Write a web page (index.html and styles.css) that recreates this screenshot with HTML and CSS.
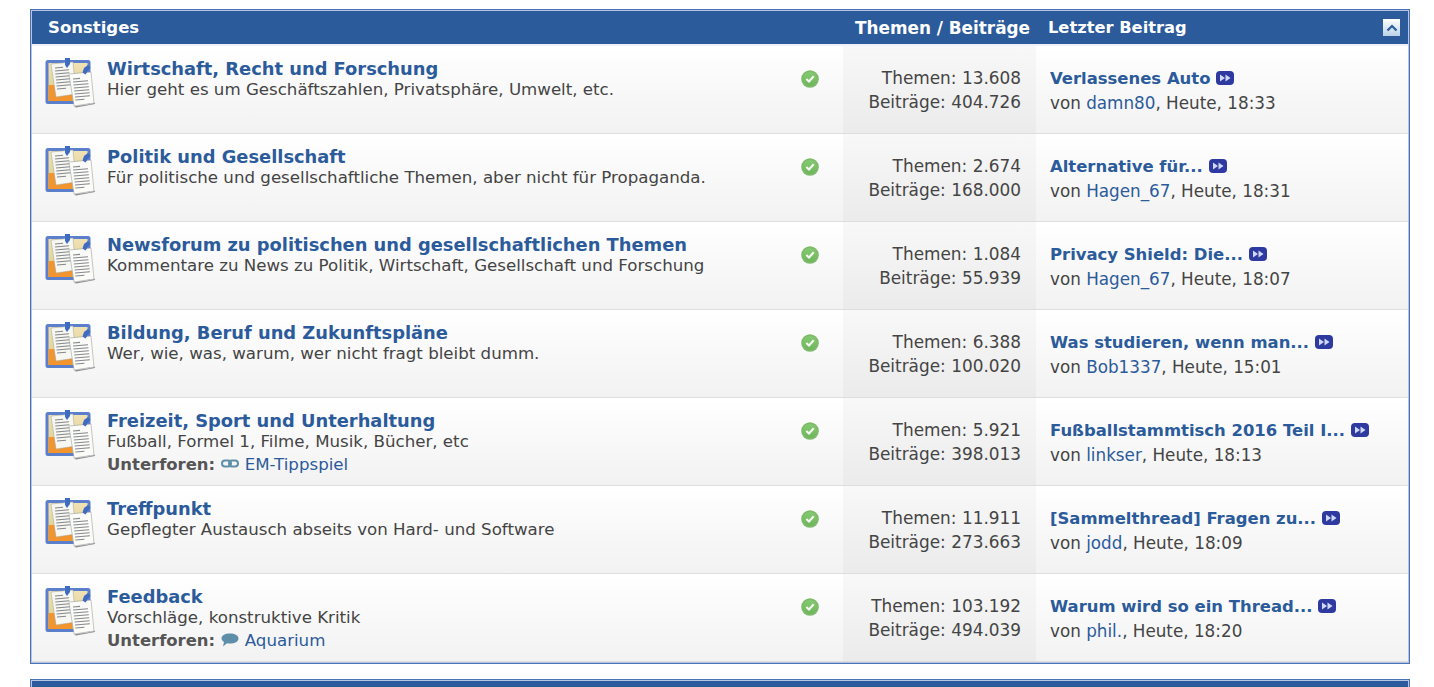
FILE: index.html
```html
<!DOCTYPE html>
<html lang="de">
<head>
    <meta charset="UTF-8">
    <meta name="viewport" content="width=device-width, initial-scale=1.0">
    <title>Sonstiges</title>
    <link rel="stylesheet" href="styles.css">
</head>
<body>
    <svg class="defs" width="0" height="0">
        <defs>
            <linearGradient id="board-tan" x1="0" y1="0" x2="0" y2="1">
                <stop offset="0" stop-color="#efe2b4"/>
                <stop offset="1" stop-color="#dcc88a"/>
            </linearGradient>
            <symbol id="forum-icon" viewBox="0 0 50 50">
                <rect x="0.500" y="2" width="45" height="44" rx="2.500" fill="#5b7fcb"/>
                <rect x="3.500" y="5" width="39" height="38" fill="url(#board-tan)"/>
                <rect x="3.500" y="27" width="24" height="16" fill="#f2952f"/>
                <path d="M6 6 L28 4 L31 36 L11 39 Z" fill="#f7f7f2" stroke="#a0a09c" stroke-width=".5"/>
                <path d="M10 10l8-.7M10 13l14-1.200M10.300 16l14-1.200M10.600 19l14-1.200M11 22l14-1.200M11.300 25l14-1.200M11.600 28l14-1.200M12 31l9-.8" stroke="#84868c" stroke-width="1.100"/>
                <path d="M24 16 L46 14 L49 45 L29 48 Z" fill="#fbfbf8" stroke="#90908f" stroke-width=".5"/>
                <path d="M28 21l7-.6M28 24l15-1.300M28.400 27l15-1.300M28.800 30l15-1.300M29.200 33l15-1.300M29.600 36l15-1.300M30 39l15-1.300M30.400 42l9-.8" stroke="#86888e" stroke-width="1.100"/>
                <path d="M46 46l4-1v1l-19 3.500-2-1z" fill="#8a8a8a"/>
                <path d="M20 0h5v6l-3 4-2-3z" fill="#3f6cc0"/>
                <path d="M39 10l4-3 2.500 2.500-5 7-3-2z" fill="#3f6cc0"/>
            </symbol>
            <linearGradient id="new-bg" x1="0" y1="0" x2="0" y2="1">
                <stop offset="0" stop-color="#86c972"/>
                <stop offset="1" stop-color="#6fb45c"/>
            </linearGradient>
            <symbol id="new-icon" viewBox="0 0 18 18">
                <circle cx="9" cy="9" r="8.800" fill="#7dba6a"/>
                <circle cx="9" cy="9" r="7" fill="url(#new-bg)"/>
                <path d="M5.300 9 L8 11.500 L12.700 6.300" fill="none" stroke="#f2f8ee" stroke-width="2.200"/>
            </symbol>
            <symbol id="go-icon" viewBox="0 0 18 14">
                <rect width="18" height="14" rx="4" fill="#2f3aa0"/>
                <path d="M4 3.500 L9 7 L4 10.500 Z M9.500 3.500 L14.500 7 L9.500 10.500 Z" fill="#cfd8f4"/>
            </symbol>
        </defs>
    </svg>

    <section class="category">
        <header class="category-head">
            <h2 class="category-title">Sonstiges</h2>
            <span class="head-stats">Themen / Beiträge</span>
            <span class="head-last">Letzter Beitrag</span>
            <span class="collapse">
                <svg width="12" height="8" viewBox="0 0 12 8"><path d="M1.500 6.500 L6 2 L10.500 6.500" fill="none" stroke="#2b5b9b" stroke-width="2.200"/></svg>
            </span>
        </header>

        <div class="forum-row">
            <svg class="forum-icon"><use href="#forum-icon"/></svg>
            <div class="forum-main">
                <a class="forum-title" href="#">Wirtschaft, Recht und Forschung</a>
                <p class="forum-desc">Hier geht es um Geschäftszahlen, Privatsphäre, Umwelt, etc.</p>
            </div>
            <svg class="status"><use href="#new-icon"/></svg>
            <div class="forum-stats"><p>Themen: 13.608</p><p>Beiträge: 404.726</p></div>
            <div class="forum-last">
                <p><a class="last-title" href="#">Verlassenes Auto</a><svg class="go"><use href="#go-icon"/></svg></p>
                <p>von <a href="#">damn80</a>, Heute, 18:33</p>
            </div>
        </div>

        <div class="forum-row">
            <svg class="forum-icon"><use href="#forum-icon"/></svg>
            <div class="forum-main">
                <a class="forum-title" href="#">Politik und Gesellschaft</a>
                <p class="forum-desc">Für politische und gesellschaftliche Themen, aber nicht für Propaganda.</p>
            </div>
            <svg class="status"><use href="#new-icon"/></svg>
            <div class="forum-stats"><p>Themen: 2.674</p><p>Beiträge: 168.000</p></div>
            <div class="forum-last">
                <p><a class="last-title" href="#">Alternative für...</a><svg class="go"><use href="#go-icon"/></svg></p>
                <p>von <a href="#">Hagen_67</a>, Heute, 18:31</p>
            </div>
        </div>

        <div class="forum-row">
            <svg class="forum-icon"><use href="#forum-icon"/></svg>
            <div class="forum-main">
                <a class="forum-title" href="#">Newsforum zu politischen und gesellschaftlichen Themen</a>
                <p class="forum-desc">Kommentare zu News zu Politik, Wirtschaft, Gesellschaft und Forschung</p>
            </div>
            <svg class="status"><use href="#new-icon"/></svg>
            <div class="forum-stats"><p>Themen: 1.084</p><p>Beiträge: 55.939</p></div>
            <div class="forum-last">
                <p><a class="last-title" href="#">Privacy Shield: Die...</a><svg class="go"><use href="#go-icon"/></svg></p>
                <p>von <a href="#">Hagen_67</a>, Heute, 18:07</p>
            </div>
        </div>

        <div class="forum-row">
            <svg class="forum-icon"><use href="#forum-icon"/></svg>
            <div class="forum-main">
                <a class="forum-title" href="#">Bildung, Beruf und Zukunftspläne</a>
                <p class="forum-desc">Wer, wie, was, warum, wer nicht fragt bleibt dumm.</p>
            </div>
            <svg class="status"><use href="#new-icon"/></svg>
            <div class="forum-stats"><p>Themen: 6.388</p><p>Beiträge: 100.020</p></div>
            <div class="forum-last">
                <p><a class="last-title" href="#">Was studieren, wenn man...</a><svg class="go"><use href="#go-icon"/></svg></p>
                <p>von <a href="#">Bob1337</a>, Heute, 15:01</p>
            </div>
        </div>

        <div class="forum-row">
            <svg class="forum-icon"><use href="#forum-icon"/></svg>
            <div class="forum-main">
                <a class="forum-title" href="#">Freizeit, Sport und Unterhaltung</a>
                <p class="forum-desc">Fußball, Formel 1, Filme, Musik, Bücher, etc</p>
                <p class="subforums"><strong>Unterforen:</strong>
                    <svg class="sub-icon" viewBox="0 0 18 14"><rect x="1" y="3.500" width="9" height="6" rx="3" fill="none" stroke="#5f8fa8" stroke-width="2"/><rect x="8" y="3.500" width="9" height="6" rx="3" fill="none" stroke="#5f8fa8" stroke-width="2"/></svg>
                    <a href="#">EM-Tippspiel</a></p>
            </div>
            <svg class="status"><use href="#new-icon"/></svg>
            <div class="forum-stats"><p>Themen: 5.921</p><p>Beiträge: 398.013</p></div>
            <div class="forum-last">
                <p><a class="last-title" href="#">Fußballstammtisch 2016 Teil I...</a><svg class="go"><use href="#go-icon"/></svg></p>
                <p>von <a href="#">linkser</a>, Heute, 18:13</p>
            </div>
        </div>

        <div class="forum-row">
            <svg class="forum-icon"><use href="#forum-icon"/></svg>
            <div class="forum-main">
                <a class="forum-title" href="#">Treffpunkt</a>
                <p class="forum-desc">Gepflegter Austausch abseits von Hard- und Software</p>
            </div>
            <svg class="status"><use href="#new-icon"/></svg>
            <div class="forum-stats"><p>Themen: 11.911</p><p>Beiträge: 273.663</p></div>
            <div class="forum-last">
                <p><a class="last-title" href="#">[Sammelthread] Fragen zu...</a><svg class="go"><use href="#go-icon"/></svg></p>
                <p>von <a href="#">jodd</a>, Heute, 18:09</p>
            </div>
        </div>

        <div class="forum-row">
            <svg class="forum-icon"><use href="#forum-icon"/></svg>
            <div class="forum-main">
                <a class="forum-title" href="#">Feedback</a>
                <p class="forum-desc">Vorschläge, konstruktive Kritik</p>
                <p class="subforums"><strong>Unterforen:</strong>
                    <svg class="sub-icon" viewBox="0 0 18 14"><path d="M9 .5C14 .5 17.500 2.500 17.500 5.500S14 10.500 9 10.500C8 10.500 7 10.500 6 10.200L2 13.500L3 9C1.500 8 .5 6.800 .5 5.500C.5 2.500 4 .5 9 .5Z" fill="#5f8fa8"/></svg>
                    <a href="#">Aquarium</a></p>
            </div>
            <svg class="status"><use href="#new-icon"/></svg>
            <div class="forum-stats"><p>Themen: 103.192</p><p>Beiträge: 494.039</p></div>
            <div class="forum-last">
                <p><a class="last-title" href="#">Warum wird so ein Thread...</a><svg class="go"><use href="#go-icon"/></svg></p>
                <p>von <a href="#">phil.</a>, Heute, 18:20</p>
            </div>
        </div>
    </section>

    <section class="category next">
        <header class="category-head"></header>
    </section>
</body>
</html>
```

FILE: styles.css
```css
/* Forenliste */
* {
    margin: 0;
    padding: 0;
    box-sizing: border-box;
}
html, body {
    height: 687px;
    overflow: hidden;
}
body {
    background: #fff;
    color: #444;
    font-family: 'DejaVu Sans', 'Liberation Sans', sans-serif;
    font-size: 16.65px;
    padding: 9px 24px 0 30px;
}
a {
    color: #2b5b9b;
    text-decoration: none;
}
.defs {
    position: absolute;
}
.category {
    border: 1px solid #4a72b4;
    padding: 1px;
    background: #b7c3e2;
}
.next {
    margin-top: 15px;
}
.category-head {
    display: flex;
    align-items: center;
    height: 35px;
    background: #2b5b9b;
    color: #fff;
    font-weight: bold;
    font-size: 16.3px;
    border-bottom: 2px solid #eef1f7;
}
.category-title {
    flex: 1;
    font-size: 16.5px;
    padding-left: 16px;
}
.head-stats {
    width: 193px;
    font-size: 16.85px;
    white-space: nowrap;
}
.head-last {
    width: 335px;
}
.collapse {
    display: flex;
    align-items: center;
    justify-content: center;
    width: 17px;
    height: 17px;
    margin-right: 8px;
    background: linear-gradient(#fff, #b9d3e6);
}
.forum-row {
    display: flex;
    height: 88px;
    background: linear-gradient(#fff, #f2f2f2);
    border-bottom: 1px solid #ddd;
}
.forum-icon {
    flex: none;
    width: 50px;
    height: 50px;
    margin: 12px 12px 0 13px;
}
.forum-main {
    flex: 1;
    padding-top: 12px;
    line-height: 22px;
    white-space: nowrap;
}
.forum-title {
    display: block;
    font-size: 17.85px;
    font-weight: bold;
    line-height: 22px;
}
.forum-desc {
    line-height: 22px;
    margin-top: -1px;
}
.subforums {
    margin-top: 1px;
}
.subforums strong {
    font-size: 16.45px;
    color: #555;
}
.sub-icon {
    width: 18px;
    height: 14px;
    margin: 0 0 0 1px;
    vertical-align: -1px;
}
.status {
    flex: none;
    width: 18px;
    height: 18px;
    margin: 24px 24px 0 0;
}
.forum-stats {
    flex: none;
    width: 193px;
    padding: 20px 15px 0 0;
    font-size: 16.9px;
    text-align: right;
    line-height: 24px;
    background: linear-gradient(#f8f8f8, #ebebeb);
}
.forum-last {
    flex: none;
    width: 372px;
    padding: 20px 0 0 14px;
    font-size: 16.8px;
    line-height: 24px;
    white-space: nowrap;
}
.last-title {
    font-size: 16.45px;
    font-weight: bold;
}
.go {
    width: 18px;
    height: 14px;
    margin-left: 6px;
    vertical-align: -1px;
}
```
